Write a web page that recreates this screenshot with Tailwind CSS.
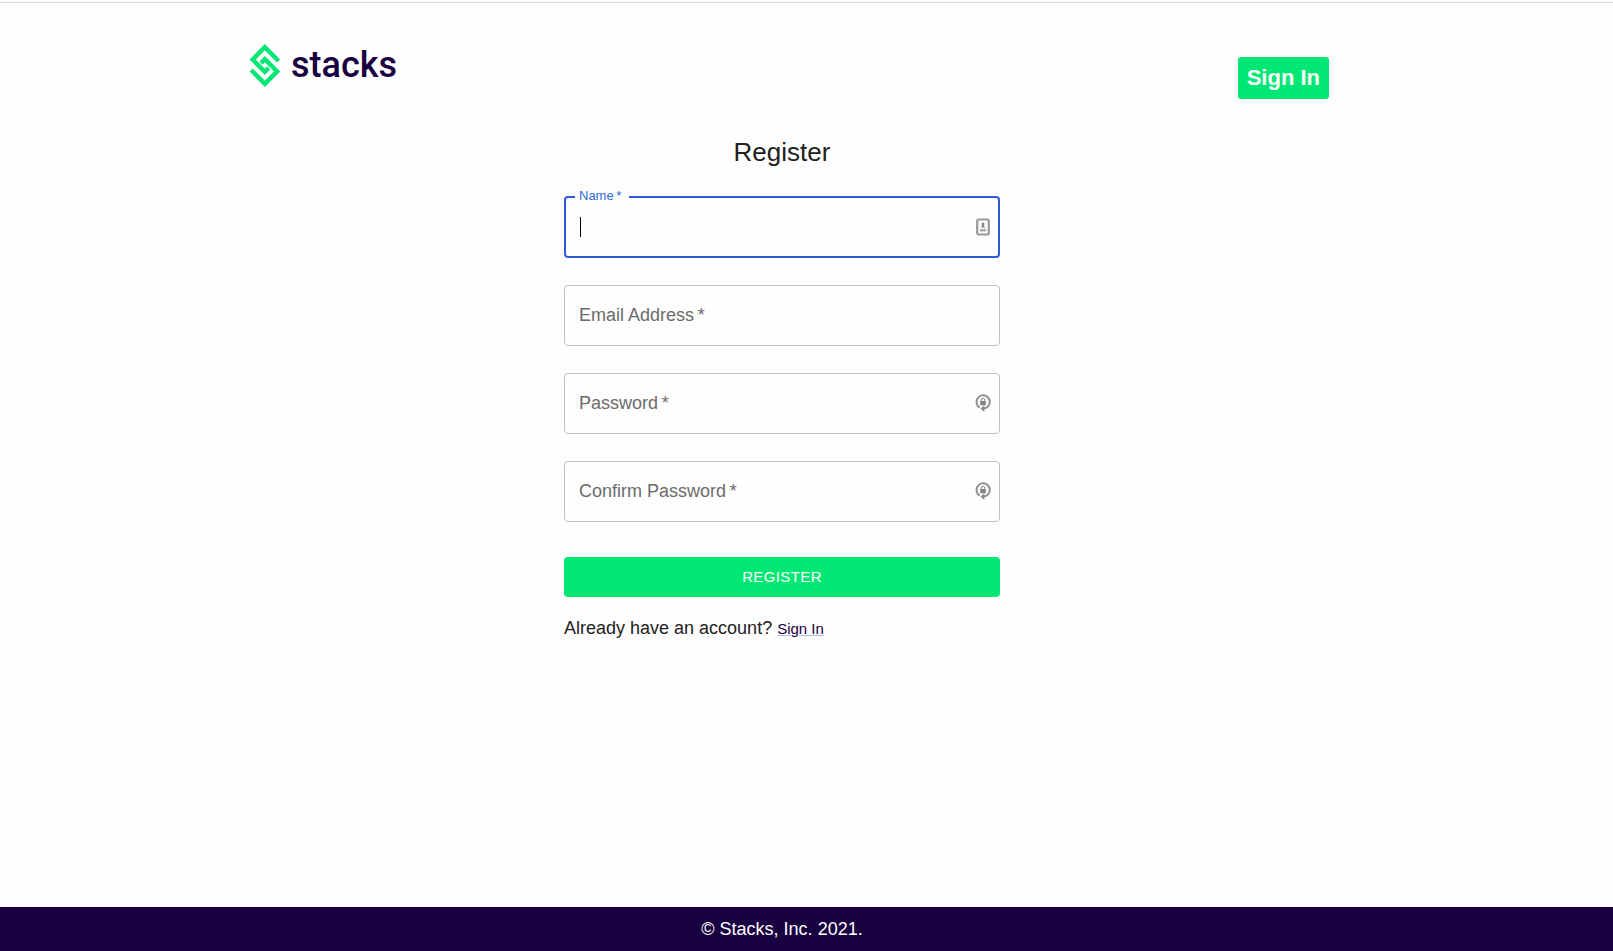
<!DOCTYPE html>
<html lang="en">
<head>
<meta charset="utf-8">
<meta name="viewport" content="width=device-width, initial-scale=1">
<title>Stacks - Register</title>
<script src="https://cdn.jsdelivr.net/npm/@tailwindcss/browser@4"></script>
</head>
<body class="flex min-h-screen flex-col bg-[#fefefe] pt-[2px] font-['Liberation_Sans',Arial,sans-serif] text-lg text-[#212121]">
  <header class="border-t border-[#dadada] pr-[35px]">
    <div class="mx-auto flex max-w-[1080px] items-start justify-between pt-10">
      <a href="#" class="flex items-center gap-2.5 text-[#190041]" aria-label="stacks">
        <svg class="h-11 w-8" viewBox="-0.5 -1 32 44" fill="none" stroke="#00e873" stroke-width="4.4" aria-hidden="true">
          <path d="M29.1 17 15.3 3.1 3.1 15.6 15.3 27.8 19.200 23.900"/>
          <path d="M1.600 26 15.400 39.900 27.600 27.400 15.400 15.200 11.500 19.100"/>
        </svg>
        <span class="font-['Roboto',sans-serif] text-4xl leading-10 font-medium">stacks</span>
      </a>
      <a href="#" class="mt-[14px] rounded-[3px] bg-[#00e873] px-[9px] py-1 text-[22px] leading-[34px] font-bold text-white">Sign In</a>
    </div>
  </header>

  <main class="flex-1 pr-[49px]">
    <div class="mx-auto mt-[35px] w-full max-w-[436px]">
      <h1 class="text-center text-[26px] leading-9">Register</h1>
      <form class="mt-[26px]">
        <div class="flex flex-col gap-[27px]">
          <div class="relative flex">
            <input id="name" type="text" required class="h-[62px] w-full rounded border-2 border-[#2f5bd8] bg-transparent px-4 caret-transparent outline-none">
            <label for="name" class="absolute -top-2 left-[11px] bg-[#fefefe] pr-2 pl-1 text-[13px] leading-4 text-[#2f6ad8]">Name&#8201;*</label>
            <span class="absolute top-[21px] left-4 h-5 w-px bg-black"></span>
            <svg class="absolute top-[22px] right-[9px] h-[18px] w-4" viewBox="0 0 16 18" aria-hidden="true">
              <rect x="2.200" y="1.500" width="11.600" height="15" rx="1.400" fill="none" stroke="#999" stroke-width="2.200"/>
              <circle cx="8" cy="6" r="1.500" fill="#888"/>
              <path d="M7 6h2v2l1.500 1.600H5.500L7 8z" fill="#888"/>
              <path d="M5 11h6v2.500H5z" fill="#aaa"/>
            </svg>
          </div>
          <div class="relative flex">
            <input id="email" type="email" required class="h-[61px] w-full rounded border border-[#c0c0c0] bg-transparent px-4 outline-none">
            <label for="email" class="absolute top-4 left-[15px] leading-7 text-[#6b6b6b]">Email Address&#8201;*</label>
          </div>
          <div class="relative flex">
            <input id="password" type="password" required class="h-[61px] w-full rounded border border-[#c0c0c0] bg-transparent px-4 outline-none">
            <label for="password" class="absolute top-4 left-[15px] leading-7 text-[#6b6b6b]">Password&#8201;*</label>
            <svg class="absolute top-5 right-[9px] h-[19px] w-4" viewBox="0 0 16 19" aria-hidden="true">
              <path d="M4.800 14.600A6.600 6.600 0 1 1 8.800 15.500" fill="none" stroke="#929292" stroke-width="2"/>
              <path d="M9.400 12.300v6.500L5.600 15.700z" fill="#858585"/>
              <path d="M5.200 8h5.600v4.300H5.200z" fill="#858585"/>
              <path d="M6.300 8.300V7a1.700 1.700 0 0 1 3.400 0v1.300" fill="none" stroke="#959595" stroke-width="1.200"/>
            </svg>
          </div>
          <div class="relative flex">
            <input id="confirm" type="password" required class="h-[61px] w-full rounded border border-[#c0c0c0] bg-transparent px-4 outline-none">
            <label for="confirm" class="absolute top-4 left-[15px] leading-7 text-[#6b6b6b]">Confirm Password&#8201;*</label>
            <svg class="absolute top-5 right-[9px] h-[19px] w-4" viewBox="0 0 16 19" aria-hidden="true">
              <path d="M4.800 14.600A6.600 6.600 0 1 1 8.800 15.500" fill="none" stroke="#929292" stroke-width="2"/>
              <path d="M9.400 12.300v6.500L5.600 15.700z" fill="#858585"/>
              <path d="M5.200 8h5.600v4.300H5.200z" fill="#858585"/>
              <path d="M6.300 8.300V7a1.700 1.700 0 0 1 3.400 0v1.300" fill="none" stroke="#959595" stroke-width="1.200"/>
            </svg>
          </div>
        </div>
        <button type="submit" class="mt-[35px] h-10 w-full rounded bg-[#00e873] text-[15px] tracking-wide text-white uppercase">Register</button>
      </form>
      <p class="mt-[15px] leading-8">Already have an account? <a href="#" class="text-[15px] text-[#190041] underline decoration-[#a9bdf0] decoration-1 underline-offset-1">Sign In</a></p>
    </div>
  </main>

  <footer class="bg-[#190041] py-2 pr-[49px] text-center leading-7 text-white">© Stacks, Inc. 2021.</footer>
</body>
</html>
